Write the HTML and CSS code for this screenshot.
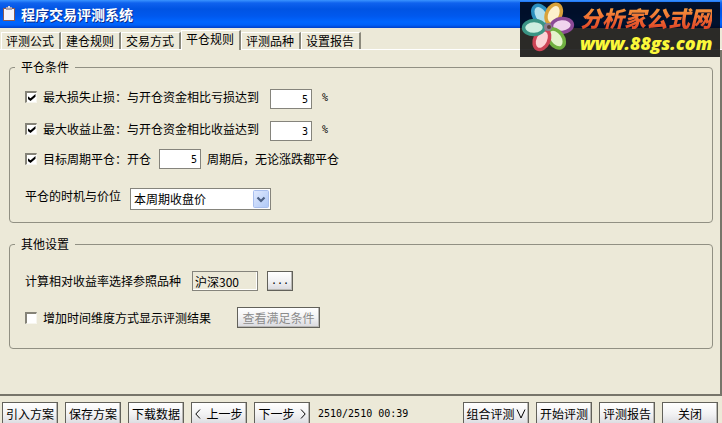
FILE: index.html
```html
<!DOCTYPE html>
<html lang="zh-CN">
<head>
<meta charset="utf-8">
<title>程序交易评测系统</title>
<link rel="stylesheet" href="styles.css">
</head>
<body>
<header class="titlebar">
  <svg class="app-icon" width="14" height="16" viewBox="0 0 14 16" aria-hidden="true">
    <rect x="1" y="2" width="12" height="13" fill="#8a5a55"/>
    <rect x="2" y="3" width="10" height="11" fill="#f6f4fb"/>
    <rect x="4" y="1" width="6" height="3" fill="#a9a4b0"/>
    <rect x="6" y="0" width="2" height="2" fill="#d8d6de"/>
  </svg>
  <h1>程序交易评测系统</h1>
</header>
<nav class="tabs">
  <button type="button" class="tab">评测公式</button>
  <button type="button" class="tab">建仓规则</button>
  <button type="button" class="tab">交易方式</button>
  <button type="button" class="tab active">平仓规则</button>
  <button type="button" class="tab">评测品种</button>
  <button type="button" class="tab">设置报告</button>
</nav>
<main class="panel">
  <fieldset class="group">
    <legend>平仓条件</legend>
    <div class="rows exit-rows">
      <div class="row top">
        <input type="checkbox" id="loss" checked>
        <label for="loss">最大损失止损：与开仓资金相比亏损达到</label>
        <input type="text" class="num wide-gap" aria-label="亏损百分比" value="5">
        <span class="unit">%</span>
      </div>
      <div class="row top second">
        <input type="checkbox" id="gain" checked>
        <label for="gain">最大收益止盈：与开仓资金相比收益达到</label>
        <input type="text" class="num wide-gap" aria-label="收益百分比" value="3">
        <span class="unit">%</span>
      </div>
      <div class="row third">
        <input type="checkbox" id="period" checked>
        <label for="period">目标周期平仓：开仓</label>
        <input type="text" class="num" id="bars" value="5">
        <label for="bars" class="after">周期后，无论涨跌都平仓</label>
      </div>
      <div class="row top fourth">
        <label for="timing">平仓的时机与价位</label>
        <div class="combo">
          <select id="timing"><option>本周期收盘价</option></select>
          <svg class="arrow" width="16" height="18" viewBox="0 0 16 18" aria-hidden="true">
            <defs><linearGradient id="ag" x2="1" y2="1"><stop stop-color="#e1eafe"/><stop offset="1" stop-color="#aec8f7"/></linearGradient></defs>
            <rect x=".5" y=".5" width="15" height="17" rx="1" fill="url(#ag)" stroke="#a9bfee"/>
            <path d="M4.500 7.500 8 11l3.500-3.500" fill="none" stroke="#4d6185" stroke-width="2.200"/>
          </svg>
        </div>
      </div>
    </div>
  </fieldset>
  <fieldset class="group">
    <legend>其他设置</legend>
    <div class="rows other-rows">
      <div class="row">
        <label for="ref">计算相对收益率选择参照品种</label>
        <input type="text" class="ref wide-gap" id="ref" value="沪深300" readonly>
        <button type="button" class="btn browse" aria-label="选择品种">...</button>
      </div>
      <div class="row view-row">
        <input type="checkbox" id="dim">
        <label for="dim">增加时间维度方式显示评测结果</label>
        <button type="button" class="btn view" disabled>查看满足条件</button>
      </div>
    </div>
  </fieldset>
</main>
<footer class="footer">
  <button type="button" class="btn">引入方案</button>
  <button type="button" class="btn">保存方案</button>
  <button type="button" class="btn">下载数据</button>
  <button type="button" class="btn"><svg width="6" height="10" viewBox="0 0 6 10" aria-hidden="true"><path d="M5 .5.800 5 5 9.500"/></svg><span>上一步</span></button>
  <button type="button" class="btn"><span>下一步</span><svg width="6" height="10" viewBox="0 0 6 10" aria-hidden="true"><path d="M1 .5 5.200 5 1 9.500"/></svg></button>
  <span class="status">2510/2510 00:39</span>
  <button type="button" class="btn combine"><span>组合评测</span><svg width="10" height="10" viewBox="0 0 10 10" aria-hidden="true"><path d="M1 .5 5 9 9 .5"/></svg></button>
  <button type="button" class="btn">开始评测</button>
  <button type="button" class="btn">评测报告</button>
  <button type="button" class="btn">关闭</button>
</footer>
<aside class="badge">
  <svg class="flower" width="54" height="52" viewBox="0 0 54 52" aria-hidden="true">
    <g transform="translate(27 25)" stroke-width="3.500">
      <ellipse cy="-14" rx="7" ry="10.500" transform="rotate(-31)" fill="#b4e0ec" stroke="#2c8fbe"/>
      <ellipse cy="-14" rx="7" ry="10.500" transform="rotate(24)" fill="#fdf0cd" stroke="#d9a23a"/>
      <ellipse cy="-14" rx="7" ry="10.500" transform="rotate(84)" fill="#f0d3ee" stroke="#8c4a96"/>
      <ellipse cy="-14" rx="7" ry="10.500" transform="rotate(145)" fill="#e3f4cc" stroke="#6fb040"/>
      <ellipse cy="-14" rx="7" ry="10.500" transform="rotate(206)" fill="#fbd3d6" stroke="#cc4456"/>
      <ellipse cy="-14" rx="7" ry="10.500" transform="rotate(268)" fill="#cdeee0" stroke="#3a9484"/>
      <circle r="4" fill="#8d7f92"/>
      <circle r="2" cx="1" fill="#5a3f3c"/>
    </g>
  </svg>
  <div class="badge-text">
    <strong>分析家公式网</strong>
    <em>www.88gs.com</em>
  </div>
</aside>
</body>
</html>
```
FILE: styles.css
```css
* { box-sizing: border-box; }
body {
  margin: 0;
  height: 100vh;
  overflow: hidden;
  display: flex;
  flex-direction: column;
  position: relative;
  background: #ece9d8;
  color: #000;
  font: 12px/16px "Noto Sans CJK SC", sans-serif;
}
button, input, select { font: inherit; color: inherit; margin: 0; border-radius: 0; }

.titlebar {
  flex: none;
  height: 28px;
  padding-left: 2px;
  display: flex;
  align-items: center;
  gap: 5px;
  background: linear-gradient(#3a94ff 0, #0f62ee 3px, #0054e3 9px, #0058ee 16px, #0066ff 22px, #0060f8 25px, #0040c8 28px);
}
.titlebar h1 {
  margin: 0;
  color: #fff;
  font-size: 14px;
  line-height: 20px;
  font-weight: 700;
  text-shadow: 1px 1px #0a2c8c;
}

.tabs {
  flex: none;
  height: 22px;
  padding-left: 1px;
  display: flex;
  align-items: flex-end;
  border-bottom: 1px solid #fff;
}
.tab {
  width: 60px;
  height: 17px;
  padding: 0 0 0 4px;
  text-align: left;
  white-space: nowrap;
  line-height: 16px;
  background: #ece9d8;
  border: solid #fff;
  border-width: 1px 2px 0 1px;
  border-right-color: #8b897c;
}
.tab.active {
  height: 20px;
  margin-bottom: -1px;
  padding-bottom: 3px;
  z-index: 1;
}

.panel {
  flex: 1;
  min-height: 0;
  padding: 9px 7px 0 9px;
  border: solid #77756a;
  border-width: 0 2px 2px 0;
}
.group {
  margin: 0 0 13px;
  padding: 0 5px;
  border: 1px solid #919083;
  border-radius: 4px;
}
.group legend { padding: 0 6px; }
.rows { padding: 0 10px; }
.exit-rows { padding-top: 14px; padding-bottom: 12px; }
.other-rows { padding-top: 19px; padding-bottom: 20px; }
.row { display: flex; align-items: center; min-height: 20px; white-space: nowrap; }
.top { align-items: flex-start; }
.second { margin-top: 12px; }
.third { margin-top: 8px; }
.fourth { margin-top: 19px; }
.view-row { margin-top: 16px; }

input[type="checkbox"] {
  appearance: none;
  width: 12px;
  height: 12px;
  margin-right: 6px;
  background: #fff;
  border: solid #858378;
  border-width: 2px 1px 1px 2px;
  border-right-color: #f7f6ef;
  border-bottom-color: #f7f6ef;
  display: grid;
  place-items: center;
}
.top input[type="checkbox"] { margin-top: 2px; }
input[type="checkbox"]:checked::before {
  content: "";
  width: 8px;
  height: 7px;
  background: #000;
  clip-path: polygon(0 30%, 38% 62%, 100% 0, 100% 38%, 38% 100%, 0 68%);
}
input[type="text"] {
  height: 20px;
  padding: 0 4px;
  border: 1px solid #85847c;
  background: #fff;
}
.num, .unit, .status { font-family: "DejaVu Sans Mono", monospace; font-size: 10px; }
input.num { width: 42px; margin-left: 8px; padding: 0 3px; text-align: right; }
input.wide-gap { margin-left: 11px; }
.unit { margin: 1px 0 0 10px; }
.after { margin-left: 6px; }

.combo { position: relative; margin-left: 9px; }
.combo select {
  display: block;
  appearance: none;
  width: 141px;
  height: 22px;
  padding: 0 20px 0 3px;
  line-height: 18px;
  background: #fff;
  border: 1px solid #85847c;
}
.arrow { position: absolute; top: 2px; right: 2px; pointer-events: none; }

input.ref { width: 66px; padding: 0 2px; background: #ece9d8; box-shadow: inset -1px -1px #fff; }
.btn {
  height: 24px;
  width: 56px;
  padding: 0;
  display: flex;
  align-items: center;
  justify-content: center;
  flex: none;
  white-space: nowrap;
  line-height: 16px;
  border: 1px solid #62615a;
  background: linear-gradient(#fff, #f2f2f3 50%, #d9d9de);
  box-shadow: inset -1px -1px #b9b8b4;
}
.btn svg { fill: none; stroke: #000; }
.btn svg:first-child { margin-right: 5px; }
.btn span + svg { margin-left: 5px; }
.browse { width: 26px; height: 20px; margin-left: 9px; font-family: "DejaVu Sans Mono", monospace; font-size: 10px; }
.view { width: 83px; height: 21px; margin-left: 26px; color: #8b8b8b; }

.footer {
  flex: none;
  height: 27px;
  padding: 6px 4px 0 2px;
  display: flex;
  align-items: flex-start;
  gap: 7px;
  overflow: hidden;
}
.status { margin: 4px auto 0 1px; white-space: nowrap; }
.footer .combine { width: 66px; }
.footer .combine svg { margin-left: 1px; }

.badge {
  position: absolute;
  top: 2px;
  right: 2px;
  width: 200px;
  height: 55px;
  display: flex;
  background: rgba(0, 0, 0, 0.82);
}
.flower { margin-left: 1px; }
.badge-text { margin-left: 5px; white-space: nowrap; }
.badge-text strong {
  display: block;
  font-size: 22px;
  line-height: 30px;
  font-style: italic;
  font-weight: 900;
  background: linear-gradient(#f7b243, #ef6a31 55%, #d93c25);
  background-clip: text;
  color: transparent;
}
.badge-text em {
  display: block;
  font: italic 800 18px/22px "Open Sans", "Noto Sans", sans-serif;
  color: #fbf83a;
}
```
